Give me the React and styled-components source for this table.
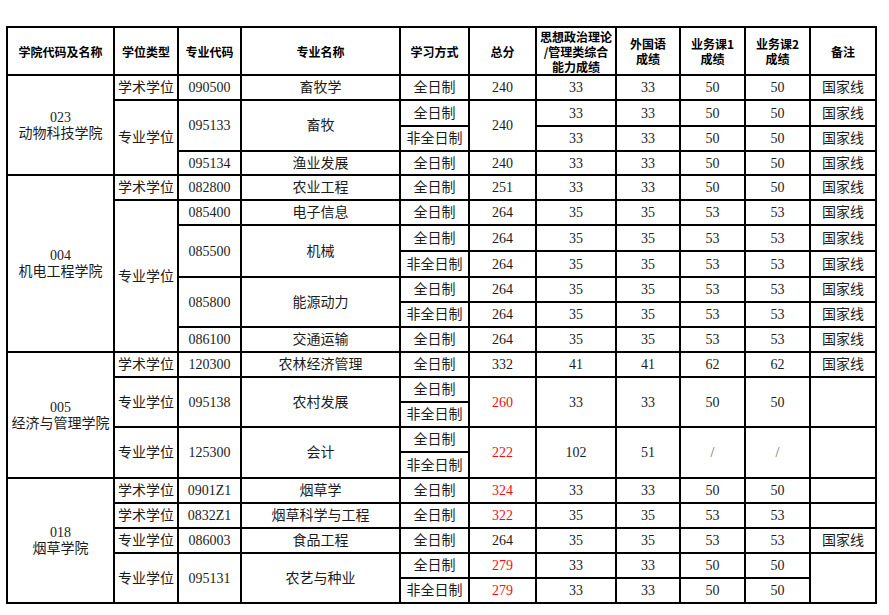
import styled, { createGlobalStyle } from "styled-components";

const GlobalStyle = createGlobalStyle`
  html, body {
    margin: 0;
    padding: 0;
    background: #fff;
  }
`;

const COLUMNS = [107, 64, 63, 159, 69, 67, 80, 64, 65, 65, 66];

const HEADERS = [
  ["学院代码及名称"],
  ["学位类型"],
  ["专业代码"],
  ["专业名称"],
  ["学习方式"],
  ["总分"],
  ["思想政治理论", "/管理类综合", "能力成绩"],
  ["外国语", "成绩"],
  ["业务课1", "成绩"],
  ["业务课2", "成绩"],
  ["备注"],
];

// row heights, read off the scan
const HEIGHTS = [25, 26, 25, 24, 25, 25, 26, 26, 25, 25, 25, 25, 25, 25, 25, 26, 25, 25, 25, 25, 25];

const c = (t, rs = 1, red = false) => ({ t, rs, red });
const R = (t, rs = 1) => c(t, rs, true);

const ROWS = [
  [c(["023", "动物科技学院"], 4), c("学术学位"), c("090500"), c("畜牧学"), c("全日制"), c("240"), c("33"), c("33"), c("50"), c("50"), c("国家线")],
  [c("专业学位", 3), c("095133", 2), c("畜牧", 2), c("全日制"), c("240", 2), c("33"), c("33"), c("50"), c("50"), c("国家线")],
  [c("非全日制"), c("33"), c("33"), c("50"), c("50"), c("国家线")],
  [c("095134"), c("渔业发展"), c("全日制"), c("240"), c("33"), c("33"), c("50"), c("50"), c("国家线")],

  [c(["004", "机电工程学院"], 7), c("学术学位"), c("082800"), c("农业工程"), c("全日制"), c("251"), c("33"), c("33"), c("50"), c("50"), c("国家线")],
  [c("专业学位", 6), c("085400"), c("电子信息"), c("全日制"), c("264"), c("35"), c("35"), c("53"), c("53"), c("国家线")],
  [c("085500", 2), c("机械", 2), c("全日制"), c("264"), c("35"), c("35"), c("53"), c("53"), c("国家线")],
  [c("非全日制"), c("264"), c("35"), c("35"), c("53"), c("53"), c("国家线")],
  [c("085800", 2), c("能源动力", 2), c("全日制"), c("264"), c("35"), c("35"), c("53"), c("53"), c("国家线")],
  [c("非全日制"), c("264"), c("35"), c("35"), c("53"), c("53"), c("国家线")],
  [c("086100"), c("交通运输"), c("全日制"), c("264"), c("35"), c("35"), c("53"), c("53"), c("国家线")],

  [c(["005", "经济与管理学院"], 5), c("学术学位"), c("120300"), c("农林经济管理"), c("全日制"), c("332"), c("41"), c("41"), c("62"), c("62"), c("国家线")],
  [c("专业学位", 2), c("095138", 2), c("农村发展", 2), c("全日制"), R("260", 2), c("33", 2), c("33", 2), c("50", 2), c("50", 2), c("", 2)],
  [c("非全日制")],
  [c("专业学位", 2), c("125300", 2), c("会计", 2), c("全日制"), R("222", 2), c("102", 2), c("51", 2), c("/", 2), c("/", 2), c("", 2)],
  [c("非全日制")],

  [c(["018", "烟草学院"], 5), c("学术学位"), c("0901Z1"), c("烟草学"), c("全日制"), R("324"), c("33"), c("33"), c("50"), c("50"), c("")],
  [c("学术学位"), c("0832Z1"), c("烟草科学与工程"), c("全日制"), R("322"), c("35"), c("35"), c("53"), c("53"), c("")],
  [c("专业学位"), c("086003"), c("食品工程"), c("全日制"), c("264"), c("35"), c("35"), c("53"), c("53"), c("国家线")],
  [c("专业学位", 2), c("095131", 2), c("农艺与种业", 2), c("全日制"), R("279"), c("33"), c("33"), c("50"), c("50"), c("", 2)],
  [c("非全日制"), R("279"), c("33"), c("33"), c("50"), c("50")],
];

export default function App() {
  return (
    <Page>
      <GlobalStyle />
      <Table>
        <colgroup>
          {COLUMNS.map((w, i) => (
            <col key={i} style={{ width: w }} />
          ))}
        </colgroup>
        <thead>
          <HeadRow>
            {HEADERS.map((lines, i) => (
              <HeadCell key={i}>
                {lines.map((line) => (
                  <HeadLine key={line}>{line}</HeadLine>
                ))}
              </HeadCell>
            ))}
          </HeadRow>
        </thead>
        <tbody>
          {ROWS.map((row, r) => (
            <BodyRow key={r} $h={HEIGHTS[r]}>
              {row.map((cell, i) => (
                <Cell key={i} rowSpan={cell.rs} $red={cell.red} $slash={cell.t === "/"}>
                  {Array.isArray(cell.t)
                    ? cell.t.map((line) => <Line key={line}>{line}</Line>)
                    : cell.t}
                </Cell>
              ))}
            </BodyRow>
          ))}
        </tbody>
      </Table>
    </Page>
  );
}

const Page = styled.div`
  padding: 26px 0 0 6px;
`;

const Table = styled.table`
  border-collapse: collapse;
  table-layout: fixed;
  width: 870px;
  font-family: "Liberation Serif", "Noto Sans CJK SC", serif;
  color: #1c1c1c;
`;

const HeadRow = styled.tr`
  height: 48px;
`;

const BodyRow = styled.tr`
  height: ${(p) => p.$h}px;
`;

const HeadCell = styled.th`
  border: 2px solid #000;
  padding: 0;
  font-family: "Noto Sans CJK SC", sans-serif;
  font-size: 12px;
  font-weight: bold;
  color: #000;
  text-align: center;
  vertical-align: middle;
`;

const HeadLine = styled.div`
  height: 15px;
  line-height: 15px;
  overflow: visible;
`;

const Cell = styled.td`
  border: 2px solid #000;
  padding: 1px 0 0;
  font-size: 14px;
  line-height: 16px;
  text-align: center;
  vertical-align: middle;
  white-space: nowrap;
  color: ${(p) => (p.$red ? "#f01010" : p.$slash ? "#666" : "#1c1c1c")};
`;

const Line = styled.div``;
